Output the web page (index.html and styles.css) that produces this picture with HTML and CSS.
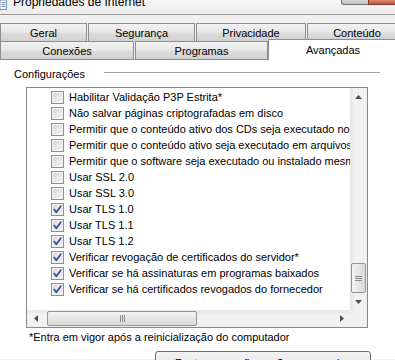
FILE: index.html
```html
<!DOCTYPE html>
<html lang="pt-BR">
<head>
<meta charset="utf-8">
<title>Propriedades de Internet</title>
<link rel="stylesheet" href="styles.css">
</head>
<body>
<div class="titlebar">
  <svg class="app-icon" width="7" height="10" viewBox="0 0 7 10">
    <rect x="0" y="0" width="6.5" height="9.5" fill="#fdfdfd" stroke="#8a9bb3"/>
    <path d="M1.5 2.5h4M1.5 4.5h4M1.5 6.5h4" stroke="#6d8fc4" stroke-width="1"/>
  </svg>
  <span class="title">Propriedades de Internet</span>
  <div class="controls">
    <span class="ctl ctl-help"></span>
    <span class="ctl ctl-close"></span>
  </div>
</div>

<div class="tabs">
  <div class="tabrow">
    <div class="tab w-geral">Geral</div>
    <div class="tab w-seg">Segurança</div>
    <div class="tab w-priv">Privacidade</div>
    <div class="tab w-cont">Conteúdo</div>
  </div>
  <div class="tabrow">
    <div class="tab w-con">Conexões</div>
    <div class="tab w-prog">Programas</div>
    <div class="tab tab-active">Avançadas</div>
  </div>
</div>

<div class="panel">
  <div class="group-head">
    <span class="group-label">Configurações</span>
    <span class="group-line"></span>
  </div>

  <div class="listbox">
    <div class="list">
      <div class="item"><span class="cb"></span><span>Habilitar Validação P3P Estrita*</span></div>
      <div class="item"><span class="cb"></span><span>Não salvar páginas criptografadas em disco</span></div>
      <div class="item"><span class="cb"></span><span>Permitir que o conteúdo ativo dos CDs seja executado no Meu Computador*</span></div>
      <div class="item"><span class="cb"></span><span>Permitir que o conteúdo ativo seja executado em arquivos do Meu Computador*</span></div>
      <div class="item"><span class="cb"></span><span>Permitir que o software seja executado ou instalado mesmo se a assinatura for inválida</span></div>
      <div class="item"><span class="cb"></span><span>Usar SSL 2.0</span></div>
      <div class="item"><span class="cb"></span><span>Usar SSL 3.0</span></div>
      <div class="item"><span class="cb checked"><svg viewBox="0 0 11 11" width="11" height="11"><path d="M2.2 5.6 L4.4 8.3 L8.8 2.2" fill="none" stroke="#3f5a98" stroke-width="1.9" stroke-linecap="round" stroke-linejoin="round"/></svg></span><span>Usar TLS 1.0</span></div>
      <div class="item"><span class="cb checked"><svg viewBox="0 0 11 11" width="11" height="11"><path d="M2.2 5.6 L4.4 8.3 L8.8 2.2" fill="none" stroke="#3f5a98" stroke-width="1.9" stroke-linecap="round" stroke-linejoin="round"/></svg></span><span>Usar TLS 1.1</span></div>
      <div class="item"><span class="cb checked"><svg viewBox="0 0 11 11" width="11" height="11"><path d="M2.2 5.6 L4.4 8.3 L8.8 2.2" fill="none" stroke="#3f5a98" stroke-width="1.9" stroke-linecap="round" stroke-linejoin="round"/></svg></span><span>Usar TLS 1.2</span></div>
      <div class="item"><span class="cb checked"><svg viewBox="0 0 11 11" width="11" height="11"><path d="M2.2 5.6 L4.4 8.3 L8.8 2.2" fill="none" stroke="#3f5a98" stroke-width="1.9" stroke-linecap="round" stroke-linejoin="round"/></svg></span><span>Verificar revogação de certificados do servidor*</span></div>
      <div class="item"><span class="cb checked"><svg viewBox="0 0 11 11" width="11" height="11"><path d="M2.2 5.6 L4.4 8.3 L8.8 2.2" fill="none" stroke="#3f5a98" stroke-width="1.9" stroke-linecap="round" stroke-linejoin="round"/></svg></span><span>Verificar se há assinaturas em programas baixados</span></div>
      <div class="item"><span class="cb checked"><svg viewBox="0 0 11 11" width="11" height="11"><path d="M2.2 5.6 L4.4 8.3 L8.8 2.2" fill="none" stroke="#3f5a98" stroke-width="1.9" stroke-linecap="round" stroke-linejoin="round"/></svg></span><span>Verificar se há certificados revogados do fornecedor</span></div>
    </div>

    <div class="vscroll">
      <div class="arrow"><svg width="7" height="4" viewBox="0 0 7 4"><path d="M0 4 L3.5 0 L7 4 Z" fill="#505050"/></svg></div>
      <div class="vtrack">
        <div class="vthumb"><svg width="7" height="5" viewBox="0 0 7 5"><path d="M0 0.5h7M0 2.5h7M0 4.5h7" stroke="#8a8a8a" stroke-width="1"/></svg></div>
      </div>
      <div class="arrow"><svg width="7" height="4" viewBox="0 0 7 4"><path d="M0 0 L3.5 4 L7 0 Z" fill="#505050"/></svg></div>
    </div>

    <div class="hscroll">
      <div class="harrow"><svg width="4" height="7" viewBox="0 0 4 7"><path d="M4 0 L0 3.5 L4 7 Z" fill="#505050"/></svg></div>
      <div class="htrack">
        <div class="hthumb"><svg width="5" height="7" viewBox="0 0 5 7"><path d="M0.5 0v7M2.5 0v7M4.5 0v7" stroke="#8a8a8a" stroke-width="1"/></svg></div>
      </div>
      <div class="harrow"><svg width="4" height="7" viewBox="0 0 4 7"><path d="M0 0 L4 3.5 L0 7 Z" fill="#505050"/></svg></div>
    </div>
    <div class="corner"></div>
  </div>

  <div class="note">*Entra em vigor após a reinicialização do computador</div>
  <div class="btn">Restaurar configurações avançadas</div>
</div>
</body>
</html>
```

FILE: styles.css
```css
* { box-sizing: border-box; }

html, body {
  margin: 0;
  padding: 0;
}

body {
  width: 395px;
  height: 360px;
  overflow: hidden;
  background: #f0f0f0;
  font-family: "Liberation Sans", Arial, sans-serif;
  font-size: 11px;
  color: #000;
}

/* title bar */
.titlebar {
  height: 15px;
  display: flex;
  align-items: flex-start;
  overflow: hidden;
  background: linear-gradient(#f6f6f6, #ececec);
  border-bottom: 1px solid #9b9b9b;
}

.app-icon {
  flex: none;
}

.title {
  font-size: 12px;
  line-height: 14px;
  margin-top: -5px;
  margin-left: 6px;
  white-space: nowrap;
}

.controls {
  margin-left: auto;
  display: flex;
}

.ctl {
  height: 5px;
  border: 1px solid #6e6e6e;
  border-top: none;
}

.ctl-help {
  width: 28px;
  background: linear-gradient(#d6d6d6, #c4c4c4);
  border-radius: 0 0 0 3px;
}

.ctl-close {
  width: 27px;
  margin-left: -1px;
  background: linear-gradient(#d98a76, #c9553d);
  border-color: #7d3a2c;
  border-right: none;
}

/* tabs */
.tabs {
  padding-top: 8px;
}

.tabrow {
  display: flex;
  align-items: flex-end;
  height: 18px;
}

.tab {
  flex: none;
  height: 18px;
  display: flex;
  align-items: center;
  justify-content: center;
  border: 1px solid #8c8e94;
  border-bottom: none;
  margin-right: 1px;
  background: linear-gradient(#f1f1f1, #e9e9e9 45%, #dcdcdc 55%, #d0d0d0);
  white-space: nowrap;
  padding-top: 1px;
}

.w-geral { width: 87px; }
.w-seg { width: 107px; }
.w-priv { width: 110px; }
.w-cont { width: 100px; }
.w-con { width: 134px; }
.w-prog { width: 133px; }

.tab-active {
  position: relative;
  z-index: 1;
  width: 130px;
  height: 21px;
  margin-top: -2px;
  margin-bottom: -1px;
  margin-left: -1px;
  background: #ffffff;
  padding-top: 0;
  padding-bottom: 1px;
}

/* panel */
.panel {
  background: #ffffff;
  border-top: 1px solid #8c8e94;
  height: 300px;
  padding-top: 6px;
}

.group-head {
  display: flex;
  align-items: flex-start;
  height: 16px;
  padding-left: 14px;
  padding-right: 15px;
}

.group-label {
  width: 90px;
  line-height: 16px;
  flex: none;
}

.group-line {
  flex: 1;
  margin-top: 6px;
  border-top: 1px solid #a0a0a0;
}

.listbox {
  margin-top: 5px;
  margin-left: 26px;
  width: 342px;
  height: 241px;
  border: 1px solid #828790;
  display: grid;
  grid-template-columns: 1fr 17px;
  grid-template-rows: 1fr 17px;
}

.list {
  overflow: hidden;
  padding-top: 1px;
  background: #fff;
}

.item {
  display: flex;
  align-items: center;
  height: 16px;
  padding-left: 24px;
  white-space: nowrap;
}

.cb {
  flex: none;
  width: 13px;
  height: 13px;
  margin-right: 5px;
  border: 1px solid #8f8f8f;
  background: linear-gradient(135deg, #d4d6d9, #f7f7f7);
  box-shadow: inset 0 0 0 1px #f4f4f4;
  display: flex;
  align-items: center;
  justify-content: center;
}

/* vertical scrollbar */
.vscroll {
  display: flex;
  flex-direction: column;
  background: linear-gradient(90deg, #e6e6e6, #f2f2f2 30%, #f0f0f0);
}

.arrow {
  height: 17px;
  flex: none;
  display: flex;
  align-items: center;
  justify-content: center;
}

.vtrack {
  flex: 1;
  display: flex;
  flex-direction: column;
  justify-content: flex-end;
}

.vthumb {
  height: 30px;
  margin: 0 1px;
  border: 1px solid #959595;
  border-radius: 2px;
  background: linear-gradient(90deg, #f4f4f4, #e6e6e6 50%, #d9d9d9);
  display: flex;
  align-items: center;
  justify-content: center;
}

/* horizontal scrollbar */
.hscroll {
  display: flex;
  background: linear-gradient(#e6e6e6, #f2f2f2 30%, #f0f0f0);
}

.harrow {
  width: 17px;
  flex: none;
  display: flex;
  align-items: center;
  justify-content: center;
}

.htrack {
  flex: 1;
  display: flex;
  padding-left: 3px;
}

.hthumb {
  width: 150px;
  margin: 1px 0;
  border: 1px solid #959595;
  border-radius: 2px;
  background: linear-gradient(#f4f4f4, #e6e6e6 50%, #d9d9d9);
  display: flex;
  align-items: center;
  justify-content: center;
}

.corner {
  background: #f0f0f0;
}

.note {
  margin-top: 1px;
  line-height: 16px;
  padding-left: 29px;
  white-space: nowrap;
}

.btn {
  margin-top: 6px;
  margin-left: 155px;
  width: 216px;
  height: 23px;
  border: 1px solid #707070;
  border-radius: 3px;
  background: linear-gradient(#f2f2f2, #ebebeb 45%, #dddddd 55%, #cfcfcf);
  display: flex;
  align-items: center;
  justify-content: center;
  white-space: nowrap;
}
```
